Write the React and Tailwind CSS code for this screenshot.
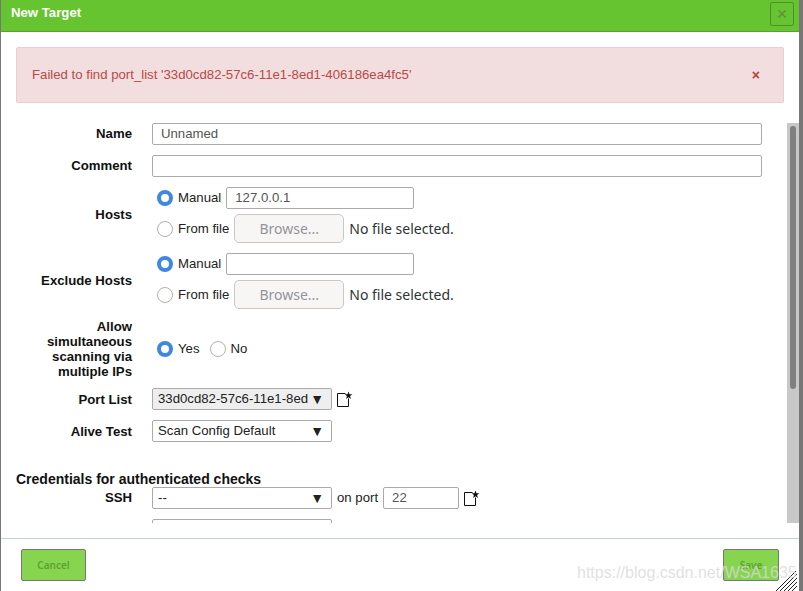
import { useState } from "react";

const sans = "font-['Liberation_Sans',sans-serif]";

const Radio = ({ checked }) => (
  <span
    className={
      checked
        ? "block w-4 h-4 rounded-full bg-white border-[4px] border-[#3f87e0] shrink-0"
        : "block w-4 h-4 rounded-full bg-white border border-[#b5b1aa] shrink-0"
    }
  />
);

const NewIcon = () => (
  <svg width="17" height="17" viewBox="0 0 17 17" className="shrink-0 block">
    <path d="M8.5 2.5H0.5V15.5H11.5V7.5" fill="none" stroke="#111" strokeWidth="1" />
    <path
      d="M11.5 0.5l1 2.7 2.9 0.1-2.3 1.8 0.8 2.8-2.4-1.6-2.4 1.6 0.8-2.8-2.3-1.8 2.9-0.1z"
      fill="#111"
    />
  </svg>
);

const Select = ({ value, disabled }) => (
  <div
    className={`w-[180px] h-[22px] border border-[#aaa] rounded-[2px] flex items-center pl-[5px] pr-[7px] text-[13.2px] text-[#222] shrink-0 ${
      disabled ? "bg-[#eeeeee]" : "bg-white"
    }`}
  >
    <span className="whitespace-nowrap overflow-hidden w-[151px]">{value}</span>
    <span className="text-[14px] leading-none ml-[2px]">▼</span>
  </div>
);

const Field = ({ label, children, raised, className = "" }) => (
  <div className={`flex items-center ${className}`}>
    <div
      className={`w-[116px] text-right font-bold text-[13.2px] leading-[15px] text-[#111] shrink-0 ${
        raised ? "-translate-y-px" : ""
      }`}
    >
      {label}
    </div>
    <div className="ml-[20px] flex-1 min-w-0">{children}</div>
  </div>
);

const TextBox = ({ value = "", className = "" }) => (
  <div
    className={`h-[22px] border border-[#aaa] rounded-[2px] bg-white pl-[8px] flex items-center text-[13.2px] text-[#555] shrink-0 ${className}`}
  >
    {value}
  </div>
);

const HostChoice = ({ value }) => (
  <div className="flex flex-col pl-[5px]">
    <div className="flex items-center h-[22px]">
      <Radio checked />
      <span className="ml-[5px] text-[13.2px] text-[#222]">Manual</span>
      <TextBox value={value} className="w-[188px] ml-[5px]" />
    </div>
    <div className="flex items-center h-[30px] mt-[5px]">
      <Radio />
      <span className="ml-[5px] text-[13.2px] text-[#222]">From file</span>
      <div className="w-[110px] h-[29px] ml-[5px] -mt-[1px] pb-[1px] border border-[#cdc7c2] rounded-[5px] bg-[#f7f6f5] flex items-center justify-center font-['Noto_Sans',sans-serif] text-[14px] text-[#92959a]">
        Browse...
      </div>
      <span className="ml-[5px] -mt-[2px] font-['Noto_Sans',sans-serif] text-[14px] text-[#2e3436]">
        No file selected.
      </span>
    </div>
  </div>
);

const App = () => {
  const [showAlert] = useState(true);

  return (
    <div className={`w-[803px] h-[591px] relative overflow-hidden bg-white ${sans}`}>
      <div className="h-full w-[799px] border-l border-l-[#777] flex flex-col bg-white">
        {/* TITLE BAR */}
        <div className="h-[32px] shrink-0 bg-[#66c430] border-b border-b-[#5a9e35] flex items-start justify-between pt-[2px] pl-[10px] pr-[5px]">
          <span className="text-white font-bold text-[13.2px] leading-[22px]">New Target</span>
          <div className="w-[24px] h-[24px] border border-[#4f8f2c] rounded-[2px] flex items-center justify-center text-[#5d8b47] text-[18px] leading-none">
            ×
          </div>
        </div>

        {/* ALERT */}
        {showAlert && (
          <div className="mt-[15px] ml-[15px] w-[768px] h-[56px] shrink-0 bg-[#f2dede] border border-[#ebccd1] rounded-[2px] flex items-center justify-between pl-[15px] pr-[23px] text-[13.2px] text-[#b94a48]">
            <span>Failed to find port_list '33d0cd82-57c6-11e1-8ed1-406186ea4fc5'</span>
            <span className="font-bold text-[14px] leading-none text-[#b8403e]">×</span>
          </div>
        )}

        {/* FORM */}
        <div className="mt-[20px] h-[400px] shrink-0 flex overflow-hidden">
          <div className="w-[786px] pl-[15px] overflow-hidden">
            <div className="flex flex-col w-[746px]">
              <Field label="Name" raised>
                <TextBox value="Unnamed" className="w-[610px]" />
              </Field>
              <Field label="Comment" raised className="mt-[10px]">
                <TextBox className="w-[610px]" />
              </Field>
              <Field label="Hosts" raised className="mt-[10px]">
                <HostChoice value="127.0.0.1" />
              </Field>
              <Field label="Exclude Hosts" raised className="mt-[9px]">
                <HostChoice />
              </Field>
              <Field label="Allow simultaneous scanning via multiple IPs" className="mt-[9px]">
                <div className="flex items-center pl-[5px]">
                  <Radio checked />
                  <span className="ml-[5px] text-[13.2px] text-[#222]">Yes</span>
                  <span className="ml-[10px]"><Radio /></span>
                  <span className="ml-[5px] text-[13.2px] text-[#222]">No</span>
                </div>
              </Field>
              <Field label="Port List" className="mt-[9px]">
                <div className="flex items-center">
                  <Select value="33d0cd82-57c6-11e1-8ed1-406186ea4fc5" disabled />
                  <span className="ml-[5px]"><NewIcon /></span>
                </div>
              </Field>
              <Field label="Alive Test" className="mt-[10px]">
                <Select value="Scan Config Default" />
              </Field>
              <h3 className="mt-[29px] font-bold text-[14px] leading-[16px] text-[#111]">
                Credentials for authenticated checks
              </h3>
              <Field label="SSH" raised>
                <div className="flex items-center">
                  <Select value="--" />
                  <span className="ml-[5px] text-[13.2px] text-[#222]">on port</span>
                  <TextBox value="22" className="w-[76px] ml-[5px]" />
                  <span className="ml-[5px]"><NewIcon /></span>
                </div>
              </Field>
              <Field label="SMB" className="mt-[10px]">
                <div className="flex items-center">
                  <Select value="--" />
                </div>
              </Field>
            </div>
          </div>

          {/* SCROLLBAR */}
          <div className="w-[12px] h-full bg-[#c8c8c8] pt-[3px] flex justify-center shrink-0">
            <div className="w-[6px] h-[263px] bg-[#808080] rounded-full" />
          </div>
        </div>

        {/* FOOTER */}
        <div className="mt-[15px] flex-1 border-t border-t-[#c5d0d6] flex justify-between items-start pt-[10px] pl-[20px] pr-[20px]">
          <button className="w-[65px] h-[32px] bg-[#87d450] border border-[#777] rounded-[2px] font-['Noto_Sans',sans-serif] font-semibold text-[10px] text-[#5ea32f]">
            Cancel
          </button>
          <button className="w-[56px] h-[32px] bg-[#87d450] border border-[#777] rounded-[2px] font-['Noto_Sans',sans-serif] font-semibold text-[10px] text-[#5ea32f]">
            Save
          </button>
        </div>
      </div>

      {/* RIGHT WINDOW EDGE */}
      <div className="absolute top-0 right-0 bottom-0 w-[4px] bg-[#777]" />

      {/* RESIZE GRIP */}
      <svg width="22" height="20" viewBox="0 0 22 20" className="absolute right-[5px] bottom-0">
        <path d="M0 20L20 0M4 20L21 3M8 20L21 7M12 20L21 11M16 20L21 15" stroke="#222" strokeWidth="1" />
      </svg>

      {/* WATERMARK */}
      <div className="absolute left-[577px] top-[562px] text-[16px] leading-[22px] whitespace-nowrap text-[#d9d9d9]/80">
        https://blog.csdn.net/WSA1635
      </div>
    </div>
  );
};

export default App;
